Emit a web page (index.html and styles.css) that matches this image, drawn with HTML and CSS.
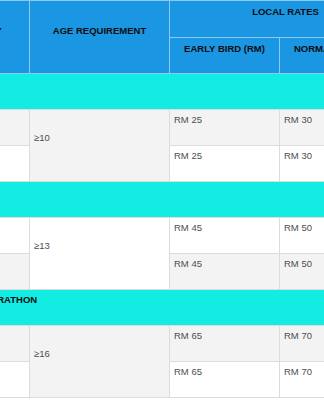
FILE: index.html
```html
<!DOCTYPE html>
<html>
<head>
<meta charset="utf-8">
<link rel="stylesheet" href="styles.css">
</head>
<body>
<div class="viewport">
  <table class="rates">
    <colgroup>
      <col class="c-cat">
      <col class="c-age">
      <col class="c-early">
      <col class="c-normal">
    </colgroup>
    <thead>
      <tr class="h1">
        <th rowspan="2" class="mid">CATEGORY</th>
        <th rowspan="2" class="mid">AGE REQUIREMENT</th>
        <th colspan="2">LOCAL RATES</th>
      </tr>
      <tr class="h2">
        <th>EARLY BIRD (RM)</th>
        <th>NORMAL RATE (RM)</th>
      </tr>
    </thead>
    <tbody>
      <tr class="section"><td colspan="4">10KM RUN</td></tr>
      <tr>
        <td>Open</td>
        <td rowspan="2" class="mid">≥10</td>
        <td>RM 25</td>
        <td>RM 30</td>
      </tr>
      <tr>
        <td>Vet</td>
        <td>RM 25</td>
        <td>RM 30</td>
      </tr>
      <tr class="section"><td colspan="4">5KM FUN</td></tr>
      <tr>
        <td>Open</td>
        <td rowspan="2" class="mid">≥13</td>
        <td>RM 45</td>
        <td>RM 50</td>
      </tr>
      <tr>
        <td>Vet</td>
        <td>RM 45</td>
        <td>RM 50</td>
      </tr>
      <tr class="section"><td colspan="4" class="long">21KM HALF MARATHON</td></tr>
      <tr>
        <td>Open</td>
        <td rowspan="2" class="mid">≥16</td>
        <td>RM 65</td>
        <td>RM 70</td>
      </tr>
      <tr>
        <td>Vet</td>
        <td>RM 65</td>
        <td>RM 70</td>
      </tr>
    </tbody>
  </table>
</div>
</body>
</html>
```
FILE: styles.css
```css
html, body {
  margin: 0;
  padding: 0;
  background: #ffffff;
}

.viewport {
  width: 324px;
  height: 400px;
  overflow: hidden;
}

.rates {
  margin-left: -79px;
  border-collapse: collapse;
  table-layout: fixed;
  width: 480px;
  font-family: "Liberation Sans", Arial, sans-serif;
  font-size: 9.5px;
  line-height: 11px;
}

.c-cat { width: 108px; }
.c-age { width: 140px; }
.c-early { width: 110px; }
.c-normal { width: 122px; }

.rates th {
  background: #1a96e3;
  color: #0d0d0d;
  font-weight: bold;
  text-align: center;
  vertical-align: top;
  padding: 5px 4px 19px;
  border: 1px solid #8ccaf1;
  white-space: nowrap;
}

.rates .h1 th {
  padding-bottom: 20px;
}

.rates th.mid {
  vertical-align: middle;
  padding-bottom: 19px;
}

.rates td {
  color: #4d4d4d;
  text-align: left;
  vertical-align: top;
  padding: 4px 4px 20px;
  border: 1px solid #dcdcdc;
  white-space: nowrap;
}

.rates td.mid {
  vertical-align: middle;
}

.rates tbody tr:nth-child(even) td {
  background: #f3f3f3;
}

.rates tbody tr:nth-child(odd) td {
  background: #ffffff;
}

.rates tbody tr.section td {
  background: #12ece3;
  color: #0d0d0d;
  font-weight: bold;
  border-left: none;
  border-right: none;
}

.rates tbody tr.section td.long {
  padding-left: 5px;
}
```
